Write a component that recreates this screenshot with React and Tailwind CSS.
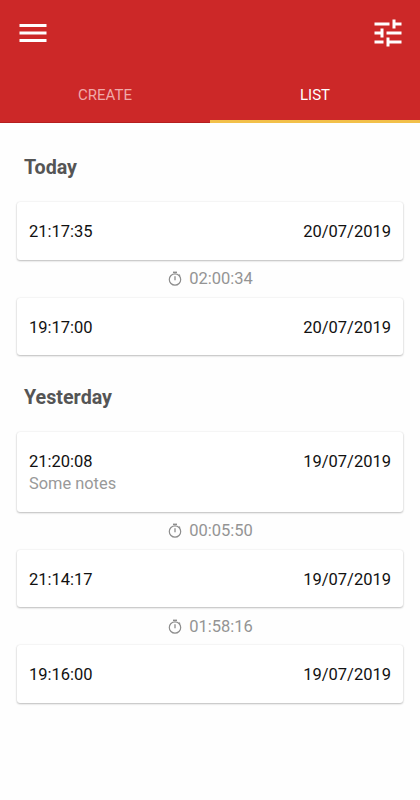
import { MdMenu, MdTune } from 'react-icons/md';

const DAYS = [
  {
    title: 'Today',
    entries: [
      { time: '21:17:35', date: '20/07/2019', elapsed: '02:00:34' },
      { time: '19:17:00', date: '20/07/2019' },
    ],
  },
  {
    title: 'Yesterday',
    entries: [
      { time: '21:20:08', date: '19/07/2019', notes: 'Some notes', elapsed: '00:05:50' },
      { time: '21:14:17', date: '19/07/2019', elapsed: '01:58:16' },
      { time: '19:16:00', date: '19/07/2019' },
    ],
  },
];

function StopwatchIcon() {
  return (
    <svg className="mb-0.5" width="14" height="15" viewBox="0 0 14 15" fill="none" stroke="#8c8c8c">
      <circle cx="7" cy="8.5" r="5.7" strokeWidth="1.2" />
      <path d="M5 1.3h4" strokeWidth="1.4" />
      <path d="M7 5.3v3.9" strokeWidth="1.3" />
      <path d="M11 3.6l1.1 1.1" strokeWidth="1.2" />
    </svg>
  );
}

function Header() {
  return (
    <header className="h-[123px] flex flex-col justify-between bg-[#cc2828] text-white">
      <div className="flex justify-between pt-[15px] pl-[14.5px] pr-3.5">
        <button aria-label="Menu"><MdMenu size={36} /></button>
        <button aria-label="Filter"><MdTune size={36} /></button>
      </div>
      <nav className="flex h-[57px] text-[15px]">
        <button className="flex-1 pt-0.5 border-b border-[#b51f1f] text-[#f0a9a9]">CREATE</button>
        <button className="flex-1 pt-1 border-b-3 border-[#f2c04a]">LIST</button>
      </nav>
    </header>
  );
}

function Entry({ entry }) {
  return (
    <>
      <div className="px-3 pt-[18px] pb-[15.5px] rounded-[3px] bg-white shadow-[0_1px_2px_rgba(0,0,0,0.24),0_0_2px_rgba(0,0,0,0.1)]">
        <div className="flex justify-between leading-6 text-[#111]">
          <span>{entry.time}</span>
          <span>{entry.date}</span>
        </div>
        {entry.notes && <p className="leading-[22px] -mt-px mb-px text-[#999] text-[16.4px]">{entry.notes}</p>}
      </div>
      {entry.elapsed && (
        <div className="flex h-[38px] items-center justify-center gap-[7px] pt-[2.5px] pl-px text-[#949494]">
          <StopwatchIcon />
          <span>{entry.elapsed}</span>
        </div>
      )}
    </>
  );
}

export default function App() {
  return (
    <div className="h-[800px] overflow-hidden bg-[#fefefe] font-[Roboto,sans-serif] text-[16.5px]">
      <Header />
      <main className="px-[17px] pt-0.5">
        {DAYS.map(day => (
          <section key={day.title} className="pt-[29px]">
            <h2 className="mb-[21px] pl-[7px] text-[19.7px] leading-[27px] font-bold text-[#555]">
              {day.title}
            </h2>
            {day.entries.map(entry => (
              <Entry key={entry.time} entry={entry} />
            ))}
          </section>
        ))}
      </main>
    </div>
  );
}
